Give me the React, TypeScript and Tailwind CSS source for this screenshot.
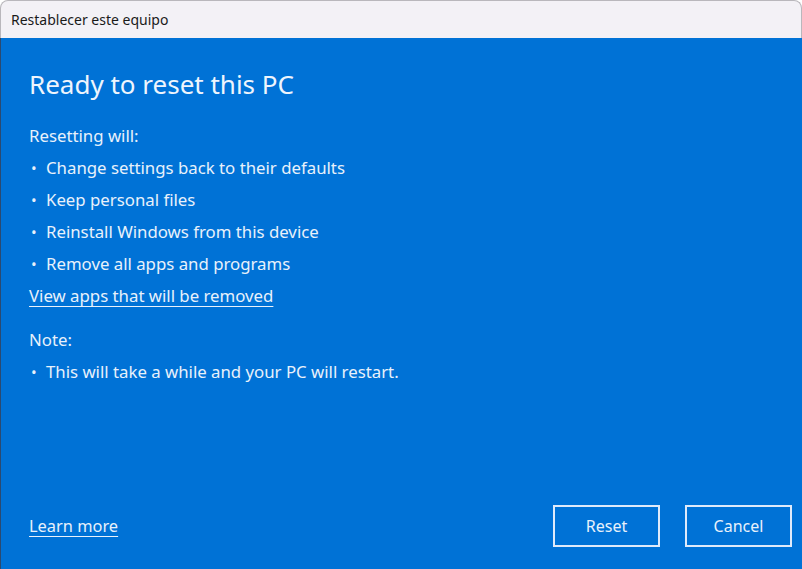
const cambios = [
  "Change settings back to their defaults",
  "Keep personal files",
  "Reinstall Windows from this device",
  "Remove all apps and programs",
];

function Bullet({ children }: { children: React.ReactNode }) {
  return (
    <li className="flex h-8 items-center">
      <span className="w-[17px] pl-[2px] text-[15px]">•</span>
      <span>{children}</span>
    </li>
  );
}

export default function App() {
  return (
    <div
      className="flex h-[569px] w-[802px] flex-col overflow-hidden bg-white"
      style={{ fontFamily: '"Segoe UI", "Noto Sans", sans-serif' }}
    >
      <div className="flex h-[38px] items-center rounded-t-[8px] border border-b-0 border-[#b9b7bc] bg-[#f3f1f6] pl-[10px] text-[14px] text-[#1a1a1a]">
        Restablecer este equipo
      </div>

      <div className="flex flex-1 flex-col border-l border-[#2b4a70] bg-[#0072d6] pl-[28px] pr-[10px] text-[#e8f1fb]">
        <h1 className="mt-[28px] text-[26px] font-normal leading-[36px] text-[#eef5fd]">Ready to reset this PC</h1>

        <p className="mt-[18px] h-8 text-[16.8px] leading-8">Resetting will:</p>
        <ul className="text-[16.8px]">
          {cambios.map((c) => (
            <Bullet key={c}>{c}</Bullet>
          ))}
        </ul>
        <a className="h-8 w-fit text-[16.8px] leading-8 underline underline-offset-[4px]">View apps that will be removed</a>

        <p className="mt-[12px] h-8 text-[16.8px] leading-8">Note:</p>
        <ul className="text-[16.8px]">
          <Bullet>This will take a while and your PC will restart.</Bullet>
        </ul>

        <div className="mt-auto mb-[22px] flex items-center">
          <a className="text-[16.4px] underline underline-offset-[4px]">Learn more</a>
          <div className="ml-auto flex gap-[25px]">
            <button className="h-[42px] w-[107px] border-2 border-[#dfeafa] text-[16px] text-[#e8f1fb]">Reset</button>
            <button className="h-[42px] w-[107px] border-2 border-[#dfeafa] text-[16px] text-[#e8f1fb]">Cancel</button>
          </div>
        </div>
      </div>
    </div>
  );
}
